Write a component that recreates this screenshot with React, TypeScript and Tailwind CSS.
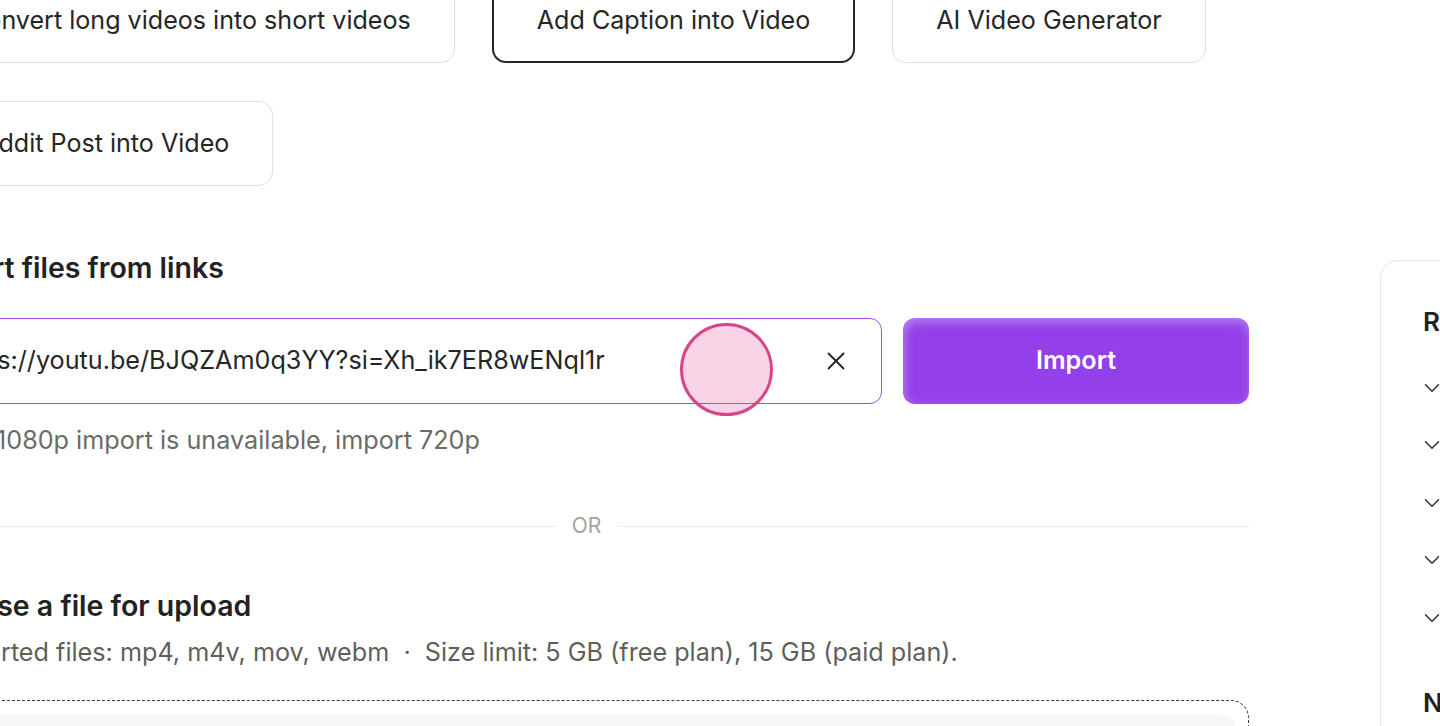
import { X, ChevronDown } from "lucide-react";

const tools = [
  { label: "Convert long videos into short videos", active: false },
  { label: "Add Caption into Video", active: true },
  { label: "AI Video Generator", active: false },
  { label: "Reddit Post into Video", active: false },
];

const sideItems = [
  "How to import a YouTube link?",
  "Which file types are supported?",
  "Why is 1080p not available?",
  "How long does an import take?",
  "Can I upload from Google Drive?",
];

export default function App() {
  return (
    <div className="relative w-[1440px] h-[726px] overflow-hidden bg-white text-[#262626] font-['Inter','Noto_Sans',sans-serif]">
      <div className="flex ml-[-76px] mt-[-22px]">
        {/* main column */}
        <div className="w-[1325px] shrink-0 flex flex-col">
          <div className="flex flex-wrap gap-x-[37px] gap-y-[38px]">
            {tools.map((t) => (
              <button
                key={t.label}
                className={`h-[85px] px-[43px] rounded-[14px] bg-white text-[25.1px] leading-none whitespace-nowrap ${
                  t.active ? "border-2 border-[#262626]" : "border border-[#e2e1da]"
                }`}
              >
                {t.label}
              </button>
            ))}
          </div>

          <h2 className="mt-[64px] text-[28.5px] leading-[36px] font-semibold text-[#222]">
            Import files from links
          </h2>

          <div className="mt-[32px] flex gap-[21px]">
            <div className="flex-1 h-[86px] flex items-center rounded-[12px] border border-[#9d4de8] pl-[26px] pr-[30px]">
              <span className="flex-1 text-[25.2px] text-[#262626] whitespace-nowrap overflow-hidden">
                https://youtu.be/BJQZAm0q3YY?si=Xh_ik7ER8wENql1r
              </span>
              <X size={30} strokeWidth={1.5} className="text-[#262626]" />
            </div>
            <button className="w-[346px] h-[86px] rounded-[12px] bg-[#9440ea] text-white text-[25.2px] font-semibold shadow-[inset_0_6px_10px_rgba(255,255,255,0.22),inset_4px_0_8px_rgba(255,255,255,0.15)]">
              Import
            </button>
          </div>

          <p className="mt-[20px] pl-[72px] text-[25.2px] leading-[32px] text-[#6b6b66]">
            1080p import is unavailable, import 720p
          </p>

          <div className="mt-[58px] h-[24px] flex items-center gap-[16px]">
            <div className="flex-1 h-px bg-[#ebebea]" />
            <span className="text-[21px] text-[#a3a39e]">OR</span>
            <div className="flex-1 h-px bg-[#ebebea]" />
          </div>

          <h2 className="mt-[50px] text-[28.5px] leading-[36px] font-semibold text-[#222]">
            Choose a file for upload
          </h2>
          <p className="mt-[12px] text-[25.2px] leading-[32px] text-[#5f5f5a] whitespace-nowrap">
            Supported files: mp4, m4v, mov, webm&nbsp;&nbsp;·&nbsp;&nbsp;Size limit: 5 GB (free plan), 15 GB (paid plan).
          </p>

          <div className="mt-[32px] rounded-[18px] border border-dashed border-[#3a3a3a] p-[14px] pr-[12px]">
            <div className="h-[200px] rounded-[14px] bg-[#f7f7f7]" />
          </div>
        </div>

        {/* side panel */}
        <aside className="ml-[131px] mt-[282px] w-[420px] shrink-0 rounded-tl-[18px] border border-[#e6e5df] pt-[45px] pl-[42px]">
          <h3 className="text-[26px] leading-[32px] font-semibold text-[#222]">Resources</h3>
          <div className="mt-[21px]">
            {sideItems.map((s) => (
              <div key={s} className="h-[57.5px] flex items-center gap-[12px]">
                <ChevronDown size={26} strokeWidth={1.4} className="ml-[-4px] text-[#333]" />
                <span className="text-[20px] text-[#333] whitespace-nowrap">{s}</span>
              </div>
            ))}
          </div>
          <h3 className="mt-[40px] text-[26px] leading-[32px] font-semibold text-[#222]">Need help?</h3>
        </aside>
      </div>

      {/* click indicator */}
      <div className="absolute left-[680px] top-[323px] w-[93px] h-[93px] rounded-full border-[3px] border-[#d8458b] bg-[#e8509a]/25" />
    </div>
  );
}
